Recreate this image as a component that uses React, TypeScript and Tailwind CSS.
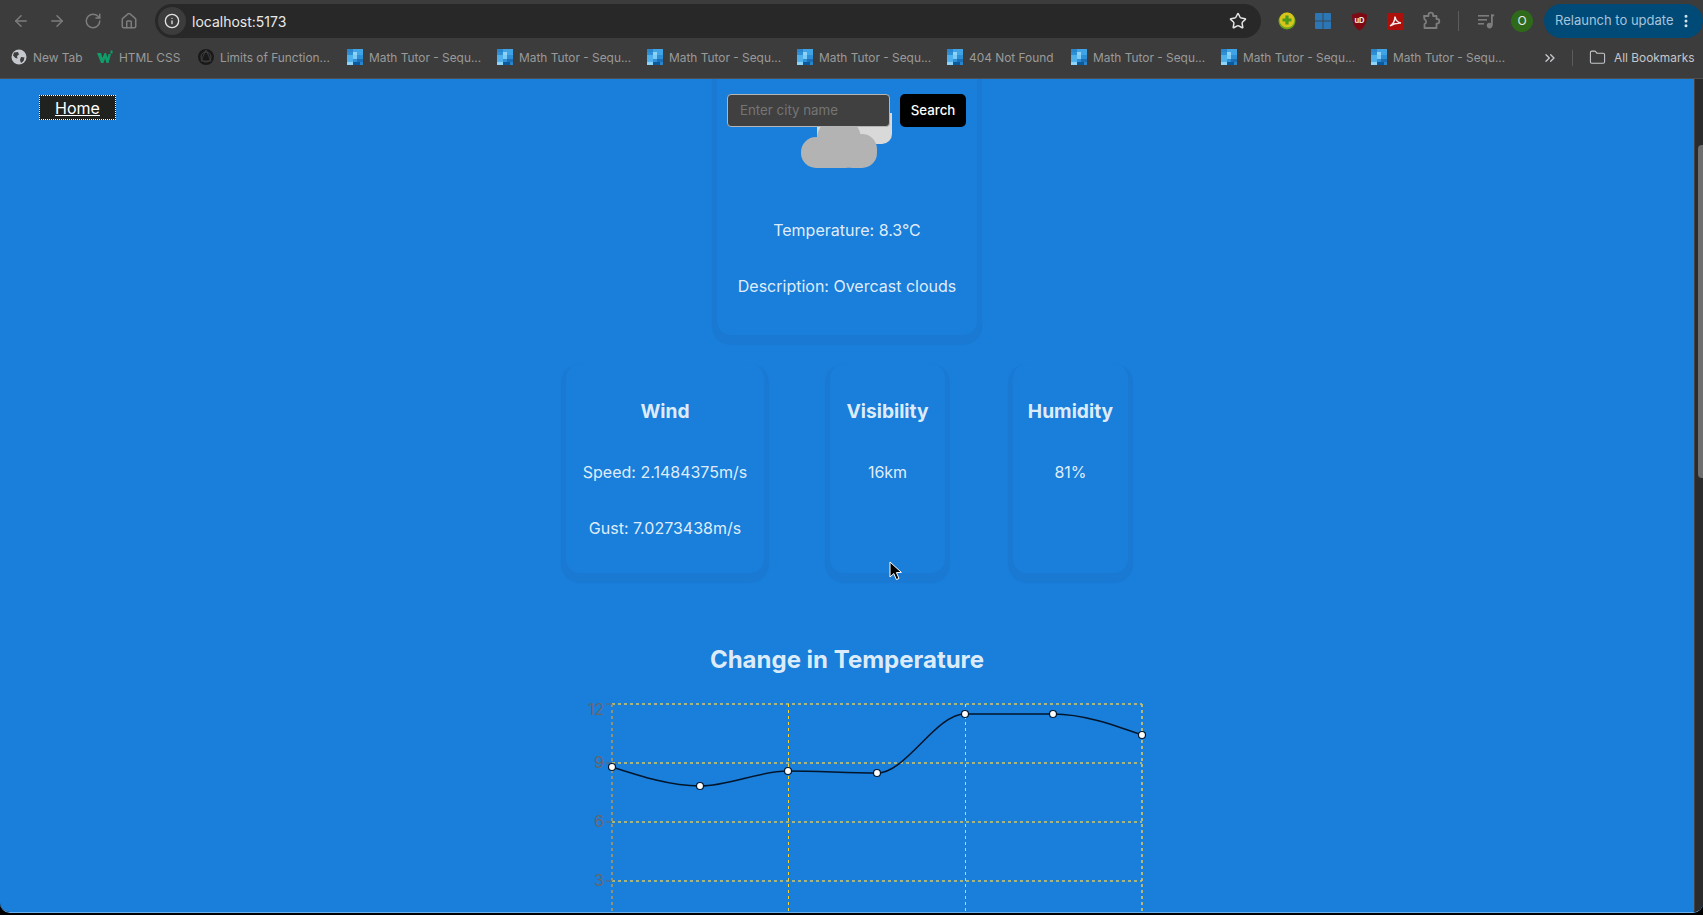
import React from 'react';
import { ArrowLeft, ArrowRight, RotateCw, Home, Info, Star, Folder, ChevronsRight, EllipsisVertical } from 'lucide-react';

const MathFavicon = () => (
  <svg width="16" height="16" viewBox="0 0 5 5" shapeRendering="crispEdges" className="shrink-0">
    <rect width="5" height="5" fill="#2f8fd6" />
    <rect x="0" y="0" width="2" height="1" fill="#2a86cc" />
    <rect x="2" y="0" width="3" height="2" fill="#3fa3e6" />
    <rect x="2" y="1" width="1" height="1" fill="#8fd3f7" />
    <rect x="0" y="2" width="2" height="2" fill="#4fb0ec" />
    <rect x="2" y="2" width="1" height="1" fill="#7ccbf5" />
    <rect x="3" y="3" width="2" height="1" fill="#1c6fb5" />
    <rect x="0" y="4" width="2" height="1" fill="#8ed4f8" />
    <rect x="2" y="4" width="2" height="1" fill="#0c5a9c" />
    <rect x="4" y="4" width="1" height="1" fill="#2a86cc" />
  </svg>
);

const GlobeFavicon = () => (
  <svg width="16" height="16" viewBox="0 0 16 16" className="shrink-0">
    <circle cx="8" cy="8" r="7.5" fill="#c4c7cc" />
    <path d="M3 3.5 L7 3 L8 5.5 L6 7 L6.5 9.5 L4.5 9 L2 6.5 Z M10 8 L13.5 8.5 L12.5 12 L10 14 L9 11 Z" fill="#3c3c3c" />
  </svg>
);

const WFavicon = () => (
  <svg width="16" height="16" viewBox="0 0 16 16" className="shrink-0">
    <path d="M0 4 H4 L5.5 9 L7.5 4 H9 L10.5 9 L11.5 5 H14 L11.5 14 H9.5 L8 9.5 L6.5 14 H4 Z" fill="#0f9d6a" />
    <rect x="13.5" y="1.5" width="2" height="3" fill="#0f9d6a" />
  </svg>
);

const LimitsFavicon = () => (
  <svg width="16" height="16" viewBox="0 0 16 16" className="shrink-0">
    <circle cx="8" cy="8" r="8" fill="#191919" />
    <circle cx="8" cy="8" r="5" fill="none" stroke="#444" strokeWidth="1" />
    <path d="M8 1 L13 12 H3 Z" fill="none" stroke="#444" strokeWidth="0.8" />
  </svg>
);

const bookmarks = [
  { name: 'New Tab', icon: <GlobeFavicon />, width: 'w-[86px]' },
  { name: 'HTML CSS', icon: <WFavicon />, width: 'w-[101px]' },
  { name: 'Limits of Function...', icon: <LimitsFavicon />, width: 'w-[149px]' },
  { name: 'Math Tutor - Sequ...', icon: <MathFavicon />, width: 'w-[150px]' },
  { name: 'Math Tutor - Sequ...', icon: <MathFavicon />, width: 'w-[150px]' },
  { name: 'Math Tutor - Sequ...', icon: <MathFavicon />, width: 'w-[150px]' },
  { name: 'Math Tutor - Sequ...', icon: <MathFavicon />, width: 'w-[150px]' },
  { name: '404 Not Found', icon: <MathFavicon />, width: 'w-[124px]' },
  { name: 'Math Tutor - Sequ...', icon: <MathFavicon />, width: 'w-[150px]' },
  { name: 'Math Tutor - Sequ...', icon: <MathFavicon />, width: 'w-[150px]' },
  { name: 'Math Tutor - Sequ...', icon: <MathFavicon />, width: 'w-[150px]' },
];

const Toolbar = () => (
  <div className="flex h-[42px] items-start bg-[#3c3c3c] pl-[3px] pt-1">
    {[ArrowLeft, ArrowRight, RotateCw, Home].map((Icon, i) => (
      <div key={i} className="flex h-[34px] w-9 items-center justify-center">
        <Icon className="h-[18px] w-[18px] text-[#7d7d7d]" strokeWidth={2} />
      </div>
    ))}
    <div className="ml-2 flex h-[34px] w-[1106px] items-center rounded-full bg-[#282828] pl-[3px] pr-[14px]">
      <div className="flex h-7 w-7 items-center justify-center rounded-full bg-[#3c3c3c]">
        <Info className="h-4 w-4 text-[#e3e3e3]" strokeWidth={2} />
      </div>
      <span className="ml-[6px] flex-1 text-[14px] text-[#e8e8e8]">localhost:5173</span>
      <Star className="h-[18px] w-[18px] text-[#e3e3e3]" strokeWidth={2} />
    </div>
    <div className="ml-2 flex h-[34px] w-9 items-center justify-center">
      <svg width="18" height="18" viewBox="0 0 18 18">
        <circle cx="9" cy="9" r="8.5" fill="#6aa51e" />
        <circle cx="9" cy="8" r="7.5" fill="#d9c41c" />
        <path d="M7.4 3.5 H10.6 V6.4 H13.5 V9.6 H10.6 V12.5 H7.4 V9.6 H4.5 V6.4 H7.4 Z" fill="#4a9a1e" />
      </svg>
    </div>
    <div className="flex h-[34px] w-9 items-center justify-center">
      <svg width="16" height="16" viewBox="0 0 16 16">
        <rect width="16" height="16" rx="1" fill="#2c76b5" />
        <path d="M8 0 V16 M0 8 H16" stroke="#3c3c3c" strokeWidth="0.8" />
      </svg>
    </div>
    <div className="flex h-[34px] w-9 items-center justify-center">
      <svg width="17" height="19" viewBox="0 0 17 19">
        <path d="M8.5 0.5 L16 2.5 C16 10 14 15.5 8.5 18.5 C3 15.5 1 10 1 2.5 Z" fill="#7d0a12" />
        <text x="8.5" y="10.5" textAnchor="middle" fontSize="7.5" fontWeight="700" fill="#eeeeee" fontFamily="Inter, sans-serif">uD</text>
      </svg>
    </div>
    <div className="flex h-[34px] w-9 items-center justify-center">
      <svg width="17" height="17" viewBox="0 0 17 17">
        <rect width="17" height="17" rx="2" fill="#ad0f0a" />
        <path d="M3 13 C6 11 8 7 8 3.5 C8.5 7 10.5 9.5 14 10 C10 9.8 6 11 3 13 Z" fill="none" stroke="#f4eaea" strokeWidth="1.5" />
      </svg>
    </div>
    <div className="flex h-[34px] w-9 items-center justify-center">
      <svg width="20" height="20" viewBox="0 0 20 20" fill="none" stroke="#7d7d7d" strokeWidth="1.8" strokeLinejoin="round">
        <path d="M3 5 H7.5 V4 A2.3 2.3 0 0 1 12.1 4 V5 H15.5 V8 H16 A2.3 2.3 0 0 1 16 12.6 H15.5 V17 H3.5 V13.2 A2.6 2.6 0 0 0 3.5 8.4 Z" />
      </svg>
    </div>
    <div className="ml-[9px] mt-[7px] h-[20px] w-px bg-[#5c5c5c]" />
    <div className="ml-[9px] flex h-[34px] w-9 items-center justify-center">
      <svg width="18" height="18" viewBox="0 0 18 18" fill="#7d7d7d">
        <rect x="1" y="3" width="11" height="1.6" />
        <rect x="1" y="7" width="9" height="1.6" />
        <rect x="1" y="11" width="6" height="1.6" />
        <rect x="14" y="2.5" width="1.8" height="11" />
        <rect x="14" y="2.5" width="3.2" height="1.8" />
        <circle cx="12.6" cy="13.6" r="2.8" />
      </svg>
    </div>
    <div className="ml-[7px] mt-[6px] flex h-[22px] w-[22px] items-center justify-center rounded-full bg-[#2f6a1b] text-[12px] text-[#e8e8e8]">
      O
    </div>
    <div className="ml-[11px] flex h-[34px] w-[159px] items-center rounded-full bg-[#004a77] pl-[11px]">
      <span className="text-[13px] text-[#a6c4dc]">Relaunch to update</span>
      <EllipsisVertical className="ml-1 h-4 w-4 text-[#d5e3ef]" strokeWidth={2.5} />
    </div>
  </div>
);

const BookmarksBar = () => (
  <div className="flex h-[37px] items-center border-b border-[#4f4f4f] bg-[#3c3c3c] pb-[5px] pl-[11px] text-[11.9px] text-[#9a9a9a]">
    {bookmarks.map((b, i) => (
      <div key={i} className={`flex items-center gap-[6px] whitespace-nowrap ${b.width}`}>
        {b.icon}
        <span>{b.name}</span>
      </div>
    ))}
    <ChevronsRight className="ml-[21px] h-4 w-4 text-[#c4c7cc]" strokeWidth={2} />
    <div className="ml-[14px] h-[16px] w-px bg-[#5c5c5c]" />
    <Folder className="ml-[16px] h-[17px] w-[17px] text-[#c4c7cc]" strokeWidth={1.5} />
    <span className="ml-[8px] whitespace-nowrap text-[#c4c7cc]">All Bookmarks</span>
  </div>
);

const InfoCard = ({ title, lines, className }: { title: string; lines: string[]; className: string }) => (
  <div className={`h-[209px] rounded-[14px] bg-[#1a7fda] pt-[33px] text-center shadow-[0_5px_1px_5px_#1a79d2] ${className}`}>
    <h3 className="text-[19.2px] font-bold leading-[28px]">{title}</h3>
    {lines.map((line, i) => (
      <p key={line} className={i === 0 ? 'mt-[35px] leading-[24px]' : 'mt-[32px] leading-[24px]'}>
        {line}
      </p>
    ))}
  </div>
);

const points = [
  [612, 767],
  [700, 786],
  [788, 771],
  [877, 773],
  [965, 714],
  [1053, 714],
  [1142, 735],
];

const TempChart = () => (
  <svg width="590" height="260" viewBox="552 694 590 260" className="mt-[18px] overflow-visible">
    <g stroke="#d9c860" strokeDasharray="3 3" strokeWidth="1.4" fill="none">
      {[704, 763, 822, 881].map((y) => (
        <line key={y} x1="612" x2="1142" y1={y} y2={y} />
      ))}
    </g>
    <g stroke="#ffd42a" strokeDasharray="3 3" fill="none">
      {[788.5, 965.5].map((x) => (
        <line key={x} x1={x} x2={x} y1="704" y2="940" />
      ))}
      <line x1="1142" x2="1142" y1="704" y2="940" stroke="#d9c860" strokeWidth="1.6" />
    </g>
    <line x1="612" x2="612" y1="704" y2="940" stroke="#8f9377" strokeWidth="2" strokeDasharray="3 3" />
    {[704, 763, 822, 881].map((y) => (
      <line key={y} x1="606" x2="612" y1={y} y2={y} stroke="#666" />
    ))}
    <g fill="#666" fontSize="16" textAnchor="end">
      <text x="604" y="715">12</text>
      <text x="604" y="768">9</text>
      <text x="604" y="827">6</text>
      <text x="604" y="886">3</text>
    </g>
    <path
      d="M612,767 C641.3,776.5 670.7,786 700,786 C729.3,786 758.7,771 788,771 C817.7,771 847.3,773 877,773 C906.3,773 935.7,714 965,714 C994.3,714 1023.7,714 1053,714 C1082.7,714 1112.3,724.5 1142,735"
      fill="none"
      stroke="#02152b"
      strokeWidth="1.5"
    />
    {points.map(([x, y]) => (
      <circle key={x} cx={x} cy={y} r="3.5" fill="#fff" stroke="#02152b" strokeWidth="1.2" />
    ))}
  </svg>
);

export default function App() {
  return (
    <div className="h-[915px] w-[1703px] overflow-hidden bg-black font-['Inter',sans-serif]">
      <Toolbar />
      <BookmarksBar />
      <div className="flex h-[834px] overflow-hidden rounded-b-[10px] border-b border-[#6db0ee]">
        <div className="relative flex w-[1694px] flex-col items-center overflow-hidden bg-[#1a7fda] text-[rgba(255,255,255,0.87)]">
          <a className="absolute left-[39px] top-[16px] z-10 flex h-[25px] w-[77px] items-center justify-center border border-dotted border-white bg-[#20221f] text-white underline">
            Home
          </a>
          <div className="absolute left-[727px] top-[15px] z-10 flex gap-[10px]">
            <input
              placeholder="Enter city name"
              className="h-[33px] w-[163px] rounded-[4px] border border-[#b5b5b5] bg-[#404040] pb-[2px] pl-3 text-[13.3px] outline-none placeholder:text-[#757575]"
            />
            <button className="h-[33px] w-[66px] rounded-[5px] bg-black text-[13.3px] font-medium text-white">Search</button>
          </div>

          <div className="mt-[-20px] flex w-[260px] flex-col items-center rounded-[14px] pb-[37px] pt-[54px] text-center shadow-[0_5px_1px_5px_#1a79d2]">
            <svg width="100" height="56" viewBox="0 0 100 56">
              <path d="M20 0 H95 V21 A10 10 0 0 1 85 31 H24 L20 24 Z" fill="#d9d9d9" />
              <circle cx="42" cy="26" r="22" fill="#b3b3b3" />
              <rect x="4" y="24" width="60" height="31" rx="15" fill="#b3b3b3" />
              <rect x="40" y="21" width="40" height="34" rx="15" fill="#b3b3b3" />
            </svg>
            <p className="mt-[49px] leading-[24px]">Temperature: 8.3°C</p>
            <p className="mt-[32px] leading-[24px]">Description: Overcast clouds</p>
          </div>

          <div className="mt-[29px] flex">
            <InfoCard title="Wind" lines={['Speed: 2.1484375m/s', 'Gust: 7.0273438m/s']} className="w-[198px]" />
            <InfoCard title="Visibility" lines={['16km']} className="ml-[66px] w-[115px]" />
            <InfoCard title="Humidity" lines={['81%']} className="ml-[68px] w-[115px]" />
          </div>

          <h2 className="mt-[71px] text-[24px] font-bold leading-[32px]">Change in Temperature</h2>
          <TempChart />

          {/* mouse pointer */}
          <svg width="14" height="20" viewBox="0 0 14 20" className="absolute left-[889px] top-[482px] z-10">
            <path d="M1 1 L1 16 L4.8 12.6 L7.4 18.6 L10 17.4 L7.4 11.6 L12.4 11.4 Z" fill="#000" stroke="#fff" strokeWidth="1" />
          </svg>
        </div>
        <div className="w-[9px] border-l border-[#444] bg-[#2b2b2b]">
          <div className="ml-[3px] mt-[66px] h-[333px] rounded-l-[4px] bg-[#6e6e6e]" />
        </div>
      </div>
    </div>
  );
}
